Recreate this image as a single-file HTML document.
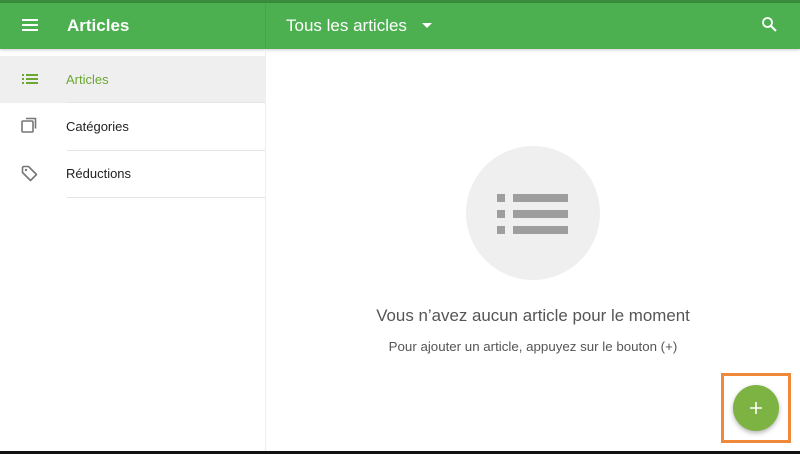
<!DOCTYPE html>
<html><head><meta charset="utf-8"><style>
*{margin:0;padding:0;box-sizing:border-box}
body{width:800px;height:454px;overflow:hidden;background:#fff;font-family:"Liberation Sans",sans-serif;position:relative}
.top{position:absolute;left:0;top:0;width:800px;height:3px;background:#388e3c}
.bar{position:absolute;left:0;top:3px;width:800px;height:46px;background:#4caf50;box-shadow:0 1px 3px rgba(0,0,0,.2)}
.sep{position:absolute;left:265px;top:3px;width:1px;height:46px;background:#46a34a}
.t{position:absolute;color:#fff;font-size:17px}
.side{position:absolute;left:265px;top:49px;width:1px;height:402px;background:#eee}
.row{position:absolute;left:0;width:265px;height:47px;font-size:13px;color:#222}
.row span{position:absolute;left:66px;top:16px}
.div{position:absolute;left:67px;width:198px;height:1px;background:#e4e4e4}
.bottom{position:absolute;left:0;top:451px;width:800px;height:3px;background:#111}
</style></head><body>
<div class="top"></div>
<div class="bar"></div>
<div class="sep"></div>
<svg style="position:absolute;left:22px;top:18px" width="16" height="14"><rect x="0" y="1" width="16" height="2" fill="#fff"/><rect x="0" y="6" width="16" height="2" fill="#fff"/><rect x="0" y="11" width="16" height="2" fill="#fff"/></svg>
<div class="t" style="left:67px;top:16px;font-weight:bold">Articles</div>
<div class="t" style="left:286px;top:16px">Tous les articles</div>
<svg style="position:absolute;left:422px;top:23px" width="10" height="6"><path d="M0 0h10L5 5z" fill="#fff"/></svg>
<svg style="position:absolute;left:761px;top:16px" width="16" height="16"><circle cx="6.5" cy="6.5" r="4.5" stroke="#fff" stroke-width="1.8" fill="none"/><path d="M10 10l5 5" stroke="#fff" stroke-width="2"/></svg>
<div class="side"></div>
<div class="row" style="top:56px;background:#efefef"><span style="color:#6aa832">Articles</span>
<svg style="position:absolute;left:22px;top:18px" width="16" height="10"><rect x="0" y="0" width="2" height="2" fill="#6aa832"/><rect x="0" y="4" width="2" height="2" fill="#6aa832"/><rect x="0" y="8" width="2" height="2" fill="#6aa832"/><rect x="4" y="0" width="12" height="2" fill="#6aa832"/><rect x="4" y="4" width="12" height="2" fill="#6aa832"/><rect x="4" y="8" width="12" height="2" fill="#6aa832"/></svg></div>
<div class="div" style="top:102px"></div>
<div class="row" style="top:103px"><span>Catégories</span>
<svg style="position:absolute;left:21px;top:14px" width="18" height="18"><rect x="1" y="4" width="11" height="11" rx="1" stroke="#777" stroke-width="1.6" fill="none"/><path d="M5 1.5h9.5v10" stroke="#777" stroke-width="1.6" fill="none"/></svg></div>
<div class="div" style="top:150px"></div>
<div class="row" style="top:150px"><span>Réductions</span>
<svg style="position:absolute;left:21px;top:15px" width="18" height="18"><path d="M1.5 2.5v5l8 8 6-6-8-8h-5z" stroke="#777" stroke-width="1.6" fill="none" stroke-linejoin="round"/><circle cx="5" cy="5" r="1.2" fill="#777"/></svg></div>
<div class="div" style="top:197px"></div>
<div style="position:absolute;left:466px;top:146px;width:134px;height:134px;border-radius:50%;background:#efefef"></div>
<svg style="position:absolute;left:497px;top:194px" width="72" height="40"><g fill="#9e9e9e"><rect x="0" y="0" width="8" height="8"/><rect x="0" y="16" width="8" height="8"/><rect x="0" y="32" width="8" height="8"/><rect x="16" y="0" width="55" height="8"/><rect x="16" y="16" width="55" height="8"/><rect x="16" y="32" width="55" height="8"/></g></svg>
<div style="position:absolute;left:266px;width:534px;top:306px;text-align:center;font-size:16.9px;color:#555">Vous n’avez aucun article pour le moment</div>
<div style="position:absolute;left:266px;width:534px;top:339px;text-align:center;font-size:13.3px;color:#555">Pour ajouter un article, appuyez sur le bouton (+)</div>
<div style="position:absolute;left:721px;top:373px;width:70px;height:70px;border:3px solid #f0883a"></div>
<div style="position:absolute;left:733px;top:385px;width:46px;height:46px;border-radius:50%;background:#7cb342;box-shadow:0 2px 5px rgba(0,0,0,.3)"></div>
<svg style="position:absolute;left:750px;top:402px" width="12" height="12"><path d="M6 0v12M0 6h12" stroke="#fff" stroke-width="1.6"/></svg>
<div class="bottom"></div>
</body></html>
